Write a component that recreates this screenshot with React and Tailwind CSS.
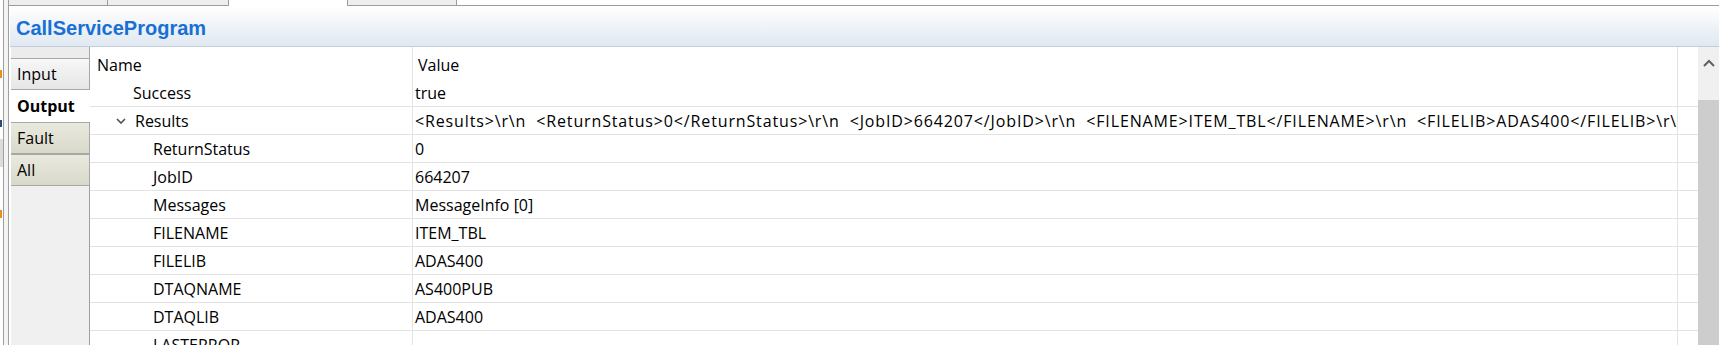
import React from 'react';

const rows = [
  { name: 'Success', value: 'true', level: 0 },
  {
    name: 'Results',
    value:
      '<Results>\\r\\n  <ReturnStatus>0</ReturnStatus>\\r\\n  <JobID>664207</JobID>\\r\\n  <FILENAME>ITEM_TBL</FILENAME>\\r\\n  <FILELIB>ADAS400</FILELIB>\\r\\n  <DTAQNAME>AS400PUB</DTAQNAME>',
    level: 0,
    expanded: true,
    wide: true,
  },
  { name: 'ReturnStatus', value: '0', level: 1 },
  { name: 'JobID', value: '664207', level: 1 },
  { name: 'Messages', value: 'MessageInfo [0]', level: 1 },
  { name: 'FILENAME', value: 'ITEM_TBL', level: 1 },
  { name: 'FILELIB', value: 'ADAS400', level: 1 },
  { name: 'DTAQNAME', value: 'AS400PUB', level: 1 },
  { name: 'DTAQLIB', value: 'ADAS400', level: 1 },
  { name: 'LASTERROR', value: '', level: 1 },
];

const Chevron = () => (
  <svg width="10" height="6" viewBox="0 0 10 6" className="mr-[9px]">
    <polyline points="1,1 5,5 9,1" fill="none" stroke="#505050" strokeWidth="1.6" />
  </svg>
);

const SideTab = ({ label, variant }) => {
  if (variant === 'selected') {
    return (
      <div className="h-[32px] flex items-center pl-[6px] bg-white font-bold text-[16px]">{label}</div>
    );
  }
  const bg =
    variant === 'beige'
      ? 'bg-gradient-to-b from-[#e9e9de] to-[#d9d9ca]'
      : 'bg-gradient-to-b from-[#f7f7f7] to-[#e6e6e6]';
  return (
    <div className={`h-[32px] flex items-center pl-[6px] border-y border-r border-[#a8a8a8] text-[16px] ${bg}`}>
      {label}
    </div>
  );
};

export default function App() {
  return (
    <div className="w-[1719px] h-[345px] overflow-hidden bg-white flex text-black font-['Open_Sans','Liberation_Sans',Arial,sans-serif] leading-[22px]">
      {/* slice of neighbouring view */}
      <div className="w-[3px] flex flex-col">
        <div className="h-[70px]" />
        <div className="h-[8px] w-[2px] bg-[#e8921e]" />
        <div className="h-[42px]" />
        <div className="h-[7px] w-[2px] bg-[#2a4a7a]" />
        <div className="h-[12px]" />
        <div className="h-[28px] w-[3px] bg-[#dcdcdc]" />
        <div className="h-[43px]" />
        <div className="h-[8px] w-[2px] bg-[#e8921e]" />
      </div>
      <div className="w-px bg-[#a0a0a0]" />
      <div className="w-[4px] bg-[#f4f4f4]" />
      <div className="w-px bg-[#a0a0a0]" />

      <div className="flex-1 flex flex-col min-w-0">
        {/* editor tabs */}
        <div className="h-[6px] flex">
          <div className="w-[99px] bg-[#eeeeee] border-r border-b border-[#9c9c9c]" />
          <div className="w-[121px] bg-[#eeeeee] border-r border-b border-[#9c9c9c]" />
          <div className="w-[118px] bg-white" />
          <div className="w-[110px] bg-[#eeeeee] border-l border-r border-b border-[#9c9c9c]" />
          <div className="flex-1 bg-white border-b border-[#9c9c9c]" />
        </div>

        {/* form title */}
        <div className="h-[41px] ml-[1px] bg-gradient-to-b from-white to-[#e0e8f1] border-b border-[#c2cedb] flex items-center pl-[6px] pt-[4px]">
          <span className="text-[20px] font-bold text-[#1771d3] font-['Liberation_Sans',Arial,sans-serif]">CallServiceProgram</span>
        </div>

        <div className="flex-1 flex min-h-0">
          <div className="w-[2px] bg-white" />
          {/* side tabs */}
          <div className="w-[79px] flex flex-col">
            <div className="h-[11px] bg-[#ececec] border-r border-[#a8a8a8]" />
            <SideTab label="Input" variant="plain" />
            <SideTab label="Output" variant="selected" />
            <SideTab label="Fault" variant="beige" />
            <SideTab label="All" variant="beige" />
            <div className="flex-1 bg-[#f0f0f0] border-r border-[#a0a0a0]" />
          </div>

          {/* property table */}
          <div className="flex-1 flex flex-col min-w-0 text-[16px]">
            <div className="h-[32px] flex shrink-0">
              <div className="w-[323px] border-r border-[#e3e3e3] flex items-center pl-[7px] pt-[4px]">Name</div>
              <div className="w-[1265px] border-r border-[#e3e3e3] flex items-center pl-[5px] pt-[4px]">Value</div>
              <div className="flex-1" />
            </div>
            {rows.map((r) => (
              <div key={r.name} className="h-[28px] flex shrink-0 border-b border-[#e3e3e3]">
                <div
                  className={`w-[323px] border-r border-[#e3e3e3] flex items-center ${
                    r.level === 0 ? (r.expanded ? 'pl-[26px]' : 'pl-[43px]') : 'pl-[63px]'
                  }`}
                >
                  {r.expanded && <Chevron />}
                  {r.name}
                </div>
                <div
                  className={`w-[1265px] border-r border-[#e3e3e3] flex items-center pl-[2px] overflow-hidden whitespace-pre ${
                    r.wide ? 'tracking-[0.86px]' : ''
                  }`}
                >
                  {r.value}
                </div>
                <div className="flex-1" />
              </div>
            ))}
          </div>

          {/* scrollbar */}
          <div className="w-[21px] flex flex-col bg-[#f0f0f0]">
            <div className="h-[53px] flex items-start justify-center pt-[12px]">
              <svg width="12" height="8" viewBox="0 0 12 8">
                <polyline points="1,7 6,2 11,7" fill="none" stroke="#606060" strokeWidth="2" />
              </svg>
            </div>
            <div className="flex-1 bg-[#cdcdcd]" />
          </div>
        </div>
      </div>
    </div>
  );
}
